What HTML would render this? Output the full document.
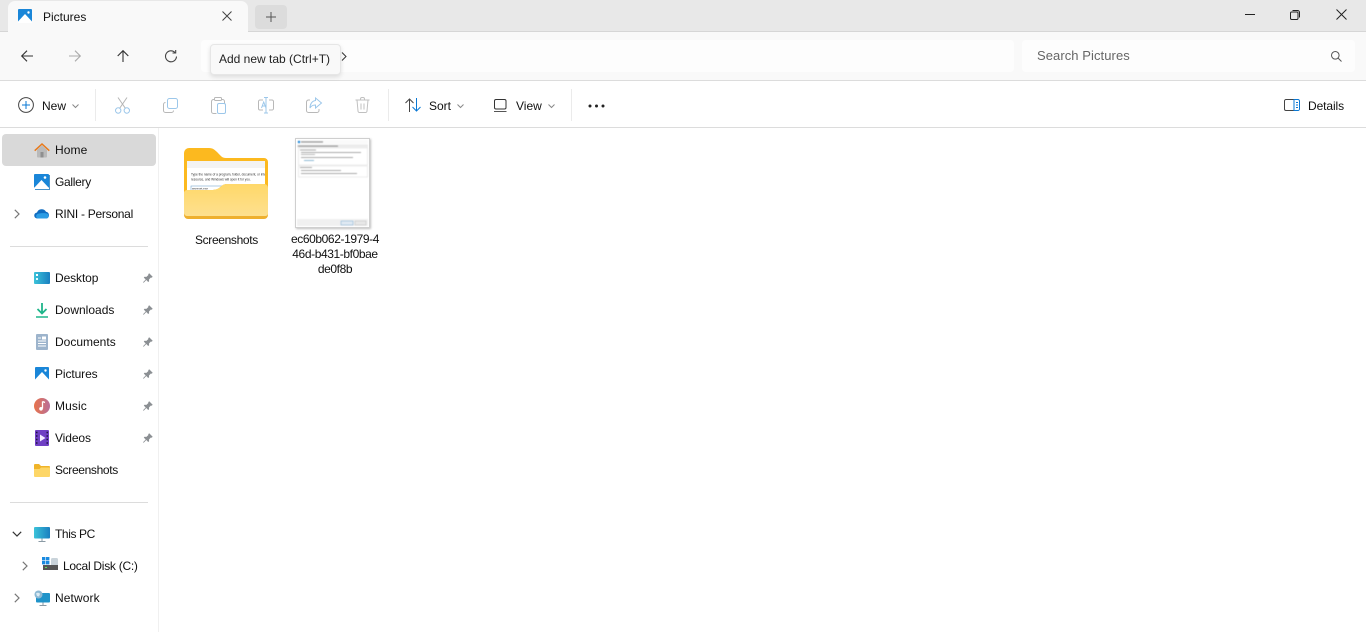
<!DOCTYPE html>
<html><head><meta charset="utf-8">
<style>
html,body{margin:0;padding:0;width:1366px;height:632px;overflow:hidden;background:#fff;font-family:"Liberation Sans",sans-serif;color:#111}
.a{position:absolute}
.t{position:absolute;font-size:12px;line-height:16px;white-space:nowrap;color:#111}
svg{position:absolute;overflow:visible}
</style></head><body>
<div class="a" style="left:0;top:0;width:1366px;height:32px;background:#e8e8e8"></div>
<div class="a" style="left:8px;top:1px;width:240px;height:32px;background:#f9f9f9;border-radius:7px 7px 0 0"></div>
<div class="a" style="left:0;top:31px;width:8px;height:1px;background:#d6d6d6"></div>
<div class="a" style="left:248px;top:31px;width:1118px;height:1px;background:#d6d6d6"></div>
<div class="a" style="left:0;top:32px;width:1366px;height:48px;background:#f9f9f9"></div>
<div class="a" style="left:0;top:80px;width:1366px;height:1px;background:#dcdcdc"></div>
<div class="a" style="left:0;top:127px;width:1366px;height:1px;background:#dcdcdc"></div>
<div class="a" style="left:158px;top:128px;width:1px;height:504px;background:#f0f0f0"></div>

<!-- tab icon -->
<svg style="left:18px;top:9px" width="14" height="14"><rect width="14" height="14" rx="1" fill="#1a86d8"/><path d="M0 14V12.500L7 5L14 12.500V14Z" fill="#fff"/><circle cx="10.500" cy="3.500" r="1.200" fill="#fff"/></svg>
<div class="t" style="left:43px;top:9px">Pictures</div>
<svg style="left:222px;top:11px" width="10" height="10"><path d="M.5.5l9 9M9.500.5l-9 9" stroke="#444" fill="none"/></svg>
<div class="a" style="left:255px;top:5px;width:32px;height:24px;background:#dcdcdc;border-radius:4px"></div>
<svg style="left:266px;top:12px" width="10" height="10"><path d="M5 0v10M0 5h10" stroke="#555" fill="none"/></svg>

<!-- window controls -->
<svg style="left:1245px;top:14px" width="10" height="1"><path d="M0 .5h10" stroke="#222"/></svg>
<svg style="left:1290px;top:10px" width="10" height="10"><rect x=".5" y="2" width="7.500" height="7.500" rx="1.200" fill="none" stroke="#222"/><path d="M2.500.5h5a2 2 0 0 1 2 2v5" fill="none" stroke="#222"/></svg>
<svg style="left:1336px;top:9px" width="11" height="11"><path d="M.5.5l10 10M10.500.5l-10 10" stroke="#222" fill="none"/></svg>

<!-- nav -->
<svg style="left:21px;top:50px" width="12" height="12"><path d="M12 6H.7M6 .7L.7 6 6 11.300" stroke="#333" fill="none" stroke-width="1.100"/></svg>
<svg style="left:69px;top:50px" width="12" height="12"><path d="M0 6h11.300M6 .7L11.300 6 6 11.300" stroke="#aaa" fill="none" stroke-width="1.100"/></svg>
<svg style="left:117px;top:50px" width="12" height="12"><path d="M6 12V.7M.7 6L6 .7 11.300 6" stroke="#333" fill="none" stroke-width="1.100"/></svg>
<svg style="left:165px;top:50px" width="12" height="12"><path d="M10 2.500A5.500 5.500 0 1 0 11.500 6.500" stroke="#444" fill="none" stroke-width="1.100"/><path d="M7.500 3h3.200V0" stroke="#444" fill="none" stroke-width="1.100"/></svg>

<!-- address bar -->
<div class="a" style="left:201px;top:40px;width:813px;height:32px;background:#fdfdfd;border-radius:4px"></div>
<svg style="left:341px;top:52px" width="6" height="9"><path d="M1 .5L5 4.500 1 8.500" stroke="#333" fill="none"/></svg>
<div class="a" style="left:210px;top:44px;width:129px;height:29px;background:#f9f9f9;border:1px solid #e6e6e6;border-radius:4px;box-shadow:0 2px 5px rgba(0,0,0,.12)"></div>
<div class="t" style="left:219px;top:51px;color:#222">Add new tab (Ctrl+T)</div>

<!-- search -->
<div class="a" style="left:1022px;top:40px;width:333px;height:32px;background:#fdfdfd;border-radius:4px"></div>
<div class="t" style="left:1037px;top:48px;color:#666;font-size:13px;letter-spacing:.07px">Search Pictures</div>
<svg style="left:1331px;top:51px" width="11" height="11"><circle cx="4.300" cy="4.300" r="3.800" fill="none" stroke="#555"/><path d="M7 7l3.500 3.500" stroke="#555"/></svg>

<!-- command bar -->
<svg style="left:18px;top:97px" width="16" height="16"><circle cx="8" cy="8" r="7.400" fill="none" stroke="#444"/><path d="M8 4v8M4 8h8" stroke="#0a78d4" fill="none"/></svg>
<div class="t" style="left:42px;top:98px">New</div>
<svg style="left:72px;top:104px" width="7" height="4"><path d="M.5.500L3.500 3.500 6.500.500" stroke="#888" fill="none"/></svg>
<div class="a" style="left:95px;top:89px;width:1px;height:32px;background:#ebebeb"></div>

<!-- cut -->
<svg style="left:115px;top:97px" width="15" height="17"><path d="M3 .5l7.500 11M12 .5L4.500 11.500" stroke="#b5b5b5" fill="none"/><circle cx="3.200" cy="13.500" r="2.700" fill="none" stroke="#9cc7ea"/><circle cx="11.800" cy="13.500" r="2.700" fill="none" stroke="#9cc7ea"/></svg>
<!-- copy -->
<svg style="left:163px;top:98px" width="15" height="15"><path d="M2.500 4.500a2 2 0 0 0-2 2v6a2 2 0 0 0 2 2h6a2 2 0 0 0 2-2" fill="none" stroke="#b8b8b8"/><rect x="4.500" y=".5" width="10" height="10" rx="2" fill="none" stroke="#9cc7ea"/></svg>
<!-- paste -->
<svg style="left:211px;top:97px" width="15" height="17"><path d="M3.500 2.500h-1a2 2 0 0 0-2 2v10a2 2 0 0 0 2 2h3M10.500 2.500h1a2 2 0 0 1 2 2v2" fill="none" stroke="#b8b8b8"/><rect x="3.500" y=".5" width="7" height="3" rx="1" fill="none" stroke="#b8b8b8"/><rect x="6.500" y="6.500" width="8" height="10" rx="1.500" fill="none" stroke="#9cc7ea"/></svg>
<!-- rename -->
<svg style="left:258px;top:97px" width="16" height="17"><path d="M5 3H2a1.500 1.500 0 0 0-1.500 1.500v7A1.500 1.500 0 0 0 2 13h3M11 3h3a1.500 1.500 0 0 1 1.500 1.500v7A1.500 1.500 0 0 1 14 13h-3" fill="none" stroke="#b8b8b8"/><path d="M8 .5v15.500M6 .5h4M6 16h4" fill="none" stroke="#9cc7ea"/><path d="M3.500 11L5.700 5 8 11M4.300 9h3" fill="none" stroke="#9cc7ea"/></svg>
<!-- share -->
<svg style="left:306px;top:97px" width="16" height="16"><path d="M4 3H2.500a2 2 0 0 0-2 2v8.500a2 2 0 0 0 2 2H11a2 2 0 0 0 2-2V12" fill="none" stroke="#b8b8b8"/><path d="M9.500 1l6 5-6 5V8C6.500 8 5 9 4 11c0-4 2-7 5.500-7.500z" fill="none" stroke="#9cc7ea"/></svg>
<!-- delete -->
<svg style="left:355px;top:97px" width="15" height="16"><path d="M.5 3h14M5.500 3V2a1.500 1.500 0 0 1 1.500-1.500h1A1.500 1.500 0 0 1 9.500 2v1M2 3l1 11a1.500 1.500 0 0 0 1.500 1.500h6A1.500 1.500 0 0 0 12 14l1-11M6 6.500v6M9 6.500v6" fill="none" stroke="#c0c0c0"/></svg>
<div class="a" style="left:388px;top:89px;width:1px;height:32px;background:#ebebeb"></div>

<svg style="left:405px;top:98px" width="16" height="14"><path d="M4.500 14V1M.5 5l4-4 4 4" stroke="#444" fill="none"/><path d="M11.500 0v13M7.500 9l4 4 4-4" stroke="#0a78d4" fill="none"/></svg>
<div class="t" style="left:429px;top:98px">Sort</div>
<svg style="left:457px;top:104px" width="7" height="4"><path d="M.5.500L3.500 3.500 6.500.500" stroke="#888" fill="none"/></svg>
<svg style="left:494px;top:99px" width="13" height="13"><rect x=".5" y=".5" width="11.500" height="9.500" rx="1.500" fill="none" stroke="#333"/><path d="M0 12.500h12.500" stroke="#555"/></svg>
<div class="t" style="left:516px;top:98px">View</div>
<svg style="left:548px;top:104px" width="7" height="4"><path d="M.5.500L3.500 3.500 6.500.500" stroke="#888" fill="none"/></svg>
<div class="a" style="left:571px;top:89px;width:1px;height:32px;background:#ebebeb"></div>
<svg style="left:588px;top:104px" width="17" height="4"><circle cx="2" cy="2" r="1.500" fill="#222"/><circle cx="8.500" cy="2" r="1.500" fill="#222"/><circle cx="15" cy="2" r="1.500" fill="#222"/></svg>

<svg style="left:1284px;top:99px" width="16" height="12"><path d="M10 .5H2A1.500 1.500 0 0 0 .5 2v8A1.500 1.500 0 0 0 2 11.500h8" fill="none" stroke="#444"/><path d="M10 .5h4A1.500 1.500 0 0 1 15.500 2v8a1.500 1.500 0 0 1-1.500 1.500h-4zM12 3.500h2M12 6h2M12 8.500h2" fill="none" stroke="#0a78d4"/></svg>
<div class="t" style="left:1308px;top:98px;letter-spacing:-.1px">Details</div>

<!-- sidebar -->
<div class="a" style="left:2px;top:134px;width:154px;height:32px;background:#d9d9d9;border-radius:4px"></div>
<svg style="left:34px;top:143px" width="16" height="15"><path d="M3 7v6.500a1 1 0 0 0 1 1h8a1 1 0 0 0 1-1V7L8 2.500z" fill="#b9b9b9"/><rect x="6.500" y="9" width="3" height="5.500" fill="#8f8f8f"/><path d="M.7 7.700L8 1l7.300 6.700" fill="none" stroke="#e8791a" stroke-width="1.500"/></svg>
<div class="t" style="left:55px;top:142px;letter-spacing:.1px">Home</div>

<svg style="left:34px;top:174px" width="16" height="16"><rect y="0" width="15" height="14" rx="1" fill="#1a86d8"/><path d="M0 14L7.500 6l7.500 8z" fill="#fff"/><circle cx="11" cy="3.500" r="1.300" fill="#fff"/><path d="M1 15.500h14.500V1" fill="none" stroke="#4a93c9"/></svg>
<div class="t" style="left:55px;top:174px;letter-spacing:-.3px">Gallery</div>

<svg style="left:14px;top:209px" width="6" height="10"><path d="M.8.800L5 5 .8 9.200" stroke="#777" fill="none" stroke-width="1.200"/></svg>
<svg style="left:34px;top:208px" width="16" height="11"><path d="M3.500 10.500a3 3 0 0 1-.5-6A5 5 0 0 1 12 3.800a3.500 3.500 0 0 1 .8 6.700z" fill="#0f6cc0"/><path d="M3.500 10.500a2.500 2.500 0 0 1 0-4.500c2-1 8-1 9.500-.5a2.800 2.800 0 0 1 0 5z" fill="#2b9ce4"/></svg>
<div class="t" style="left:55px;top:206px;letter-spacing:-.27px">RINI - Personal</div>

<div class="a" style="left:10px;top:246px;width:138px;height:1px;background:#dcdcdc"></div>

<svg style="left:34px;top:272px" width="16" height="12"><defs><linearGradient id="dk" x1="0" y1="0" x2="1" y2="0"><stop offset="0" stop-color="#3cc3d9"/><stop offset="1" stop-color="#1a7fc0"/></linearGradient></defs><rect width="16" height="12" rx="1" fill="url(#dk)"/><rect x="2" y="2" width="2" height="2" fill="#fff"/><rect x="2" y="6" width="2" height="2" fill="#dff"/></svg>
<div class="t" style="left:55px;top:270px;letter-spacing:-.1px">Desktop</div>

<svg style="left:36px;top:302px" width="12" height="16"><path d="M6 1v10M1.500 7L6 11.500 10.500 7" stroke="#1fb58a" stroke-width="1.800" fill="none"/><path d="M0 15h12" stroke="#1fb58a" stroke-width="1.500"/></svg>
<div class="t" style="left:55px;top:302px">Downloads</div>

<svg style="left:36px;top:334px" width="12" height="16"><rect width="12" height="16" rx="1" fill="#9db4cc"/><path d="M2 4h3M2 7h8M2 9.500h8M2 12h8" stroke="#fff"/><rect x="6" y="2.500" width="4" height="3" fill="#fff"/></svg>
<div class="t" style="left:55px;top:334px">Documents</div>

<svg style="left:35px;top:367px" width="14" height="14"><rect width="14" height="14" rx="1" fill="#1a86d8"/><path d="M0 14V12.500L7 5 14 12.500V14z" fill="#fff"/><circle cx="10.500" cy="3.500" r="1.200" fill="#fff"/></svg>
<div class="t" style="left:55px;top:366px;letter-spacing:-.1px">Pictures</div>

<svg style="left:34px;top:398px" width="16" height="16"><defs><linearGradient id="mu" x1="0" y1="0" x2="1" y2="0"><stop offset="0" stop-color="#e8734a"/><stop offset="1" stop-color="#b76e9a"/></linearGradient></defs><circle cx="8" cy="8" r="8" fill="url(#mu)"/><path d="M8.500 3.500v7" stroke="#fff" stroke-width="1.300"/><circle cx="7" cy="10.800" r="1.800" fill="#fff"/><path d="M8.500 3.500l2.500 1" stroke="#fff" stroke-width="1.300"/></svg>
<div class="t" style="left:55px;top:398px;letter-spacing:.1px">Music</div>

<svg style="left:35px;top:430px" width="14" height="16"><rect width="14" height="16" rx="1" fill="#6f3fc4"/><path d="M5 4.500v7l5.500-3.500z" fill="#f2eaff"/><path d="M1 2.500h1.500M1 6h1.500M1 9.500h1.500M1 13h1.500M11.500 2.500H13M11.500 6H13M11.500 9.500H13M11.500 13H13" stroke="#1f1440" stroke-width="1.500"/></svg>
<div class="t" style="left:55px;top:430px;letter-spacing:-.1px">Videos</div>

<svg style="left:34px;top:463px" width="16" height="14"><path d="M0 2a1 1 0 0 1 1-1h4l2 2h8a1 1 0 0 1 1 1v3H0z" fill="#f0b429"/><path d="M0 13a1 1 0 0 0 1 1h14a1 1 0 0 0 1-1V4.500H7L5.500 6H0z" fill="#fdd667"/></svg>
<div class="t" style="left:55px;top:462px;letter-spacing:-.35px">Screenshots</div>

<div class="a" style="left:10px;top:502px;width:138px;height:1px;background:#dcdcdc"></div>

<svg style="left:12px;top:531px" width="10" height="6"><path d="M.8.800L5 5 9.200.800" stroke="#333" fill="none" stroke-width="1.200"/></svg>
<svg style="left:34px;top:527px" width="16" height="15"><defs><linearGradient id="pc" x1="0" y1="0" x2="1" y2="0"><stop offset="0" stop-color="#3cc3d9"/><stop offset="1" stop-color="#1a7fc0"/></linearGradient></defs><rect width="16" height="11.500" rx="1" fill="url(#pc)"/><path d="M8 11.500v3M4.500 14.500h7" stroke="#8a9aa5"/></svg>
<div class="t" style="left:55px;top:526px;letter-spacing:-.4px">This PC</div>

<svg style="left:22px;top:561px" width="6" height="10"><path d="M.8.800L5 5 .8 9.200" stroke="#777" fill="none" stroke-width="1.200"/></svg>
<svg style="left:42px;top:557px" width="17" height="15"><rect x="0" y="0" width="3.400" height="3.400" fill="#1a8ae0"/><rect x="4" y="0" width="3.400" height="3.400" fill="#1a8ae0"/><rect x="0" y="4" width="3.400" height="3.400" fill="#1a8ae0"/><rect x="4" y="4" width="3.400" height="3.400" fill="#1a8ae0"/><rect x="9" y="1" width="7" height="12" fill="#c9d3da" rx="1.500"/><rect x="1" y="8" width="15" height="5" fill="#555"/><rect x="3" y="10" width="2" height="1" fill="#5fe05f"/></svg>
<div class="t" style="left:63px;top:558px;letter-spacing:-.27px">Local Disk (C:)</div>

<svg style="left:14px;top:593px" width="6" height="10"><path d="M.8.800L5 5 .8 9.200" stroke="#777" fill="none" stroke-width="1.200"/></svg>
<svg style="left:34px;top:590px" width="16" height="16"><rect x="2" y="3" width="14" height="9.500" rx="1" fill="#1f93c9"/><path d="M9 12.500v3M5.500 15.500h7" stroke="#8a9aa5"/><circle cx="4.500" cy="4.500" r="4" fill="#8db9d4"/><path d="M2 3.500c1.500-1 3-1 4 .5l-1 2.500-2-.5z" fill="#dceaf2"/></svg>
<div class="t" style="left:55px;top:590px;letter-spacing:.1px">Network</div>

<!-- pins -->
<svg style="display:none"><symbol id="pin" viewBox="0 0 10 10"><path d="M6.200.3L9.700 3.800 8.700 4.700 7.900 4.500 6 6.500 6.100 8.300 5.200 9 3.300 7 .7 9.800 0 9.200 2.700 6.500 .8 4.600 1.500 3.700 3.400 3.900 5.400 2 5.200 1.200z" fill="#8b8f93"/></symbol></svg>
<svg style="left:143px;top:273px" width="10" height="10"><use href="#pin"/></svg>
<svg style="left:143px;top:305px" width="10" height="10"><use href="#pin"/></svg>
<svg style="left:143px;top:337px" width="10" height="10"><use href="#pin"/></svg>
<svg style="left:143px;top:369px" width="10" height="10"><use href="#pin"/></svg>
<svg style="left:143px;top:401px" width="10" height="10"><use href="#pin"/></svg>
<svg style="left:143px;top:433px" width="10" height="10"><use href="#pin"/></svg>

<!-- folder -->
<svg style="left:184px;top:148px" width="85" height="67">
<defs><linearGradient id="ff" x1="0" y1="0" x2="0" y2="1"><stop offset="0" stop-color="#ffd869"/><stop offset="1" stop-color="#fde08f"/></linearGradient>
<clipPath id="pp"><rect x="3" y="13" width="78" height="30"/></clipPath></defs>
<path d="M0 5a5 5 0 0 1 5-5h20c4 0 6 2 9 5s4 5 8 5h38a4 4 0 0 1 4 4v30H0z" fill="#fcb91f"/>
<g clip-path="url(#pp)">
<rect x="3" y="13" width="78" height="30" fill="#fff"/><rect x="3" y="13" width="78" height="7" fill="#f3f3f3"/>
<text x="7" y="27.500" font-size="3.150" font-family="Liberation Sans" fill="#333">Type the name of a program, folder, document, or internet</text>
<text x="7" y="32.500" font-size="3.150" font-family="Liberation Sans" fill="#333">resource, and Windows will open it for you.</text>
<rect x="7" y="38" width="32" height="6" fill="#fff" stroke="#7ba9d0" stroke-width=".6"/>
<text x="8" y="41.500" font-size="3" font-family="Liberation Sans" fill="#333">wsreset.exe</text>
</g>
<path d="M0 45a3 3 0 0 1 3-3h24c5 0 7-1 10-3.500s4-2.500 8-2.500h35a4 4 0 0 1 4 4v27a4 4 0 0 1-4 4H4a4 4 0 0 1-4-4z" fill="#eeb02f"/>
<path d="M0 45a3 3 0 0 1 3-3h24c5 0 7-1 10-3.500s4-2.500 8-2.500h35a4 4 0 0 1 4 4v25.500a2.500 2.500 0 0 1-2.500 2.500H3a3 3 0 0 1-3-3z" fill="url(#ff)"/>
</svg>
<div class="t" style="left:195px;top:232px;letter-spacing:-.35px">Screenshots</div>

<!-- thumbnail -->
<div class="a" style="left:295px;top:138px;width:75px;height:90px;background:#fff;border:1px solid #cfcfcf;box-shadow:1px 1px 2px rgba(0,0,0,.25);box-sizing:border-box"></div>
<svg style="left:296px;top:139px;filter:blur(.45px)" width="74" height="88">
<rect x="1" y="1" width="71" height="4" fill="#fafafa"/><circle cx="3" cy="3" r="1.200" fill="#1a86d8"/><rect x="5" y="2.300" width="22" height="1.300" fill="#999"/>
<rect x="1" y="5.500" width="71" height="3" fill="#ececec"/><rect x="2" y="6.500" width="40" height="1.200" fill="#999"/>
<rect x="2.500" y="9" width="69" height="17" fill="none" stroke="#e2e2e2" stroke-width=".6"/>
<rect x="4" y="10.500" width="16" height="1" fill="#aaa"/><rect x="5" y="13" width="60" height="1" fill="#aaa"/><rect x="5" y="15" width="14" height="1" fill="#bbb"/><rect x="5" y="18" width="52" height="1" fill="#aaa"/><rect x="8" y="21" width="10" height="1" fill="#8db9d4"/>
<rect x="2.500" y="27" width="69" height="11" fill="none" stroke="#e2e2e2" stroke-width=".6"/>
<rect x="4" y="28" width="12" height="1" fill="#aaa"/><rect x="5" y="31" width="40" height="1" fill="#aaa"/><rect x="5" y="34" width="56" height="1" fill="#aaa"/>
<rect x="1" y="80" width="71" height="7" fill="#f0f0f0"/><rect x="45" y="82" width="12" height="4" fill="#e0eaf2" stroke="#7ba9d0" stroke-width=".5"/><rect x="59" y="82" width="11" height="4" fill="#e8e8e8" stroke="#bbb" stroke-width=".5"/>
</svg>
<div class="t" style="left:280px;top:232px;width:110px;text-align:center;line-height:15px;letter-spacing:-.4px">ec60b062-1979-4<br>46d-b431-bf0bae<br>de0f8b</div>
</body></html>
